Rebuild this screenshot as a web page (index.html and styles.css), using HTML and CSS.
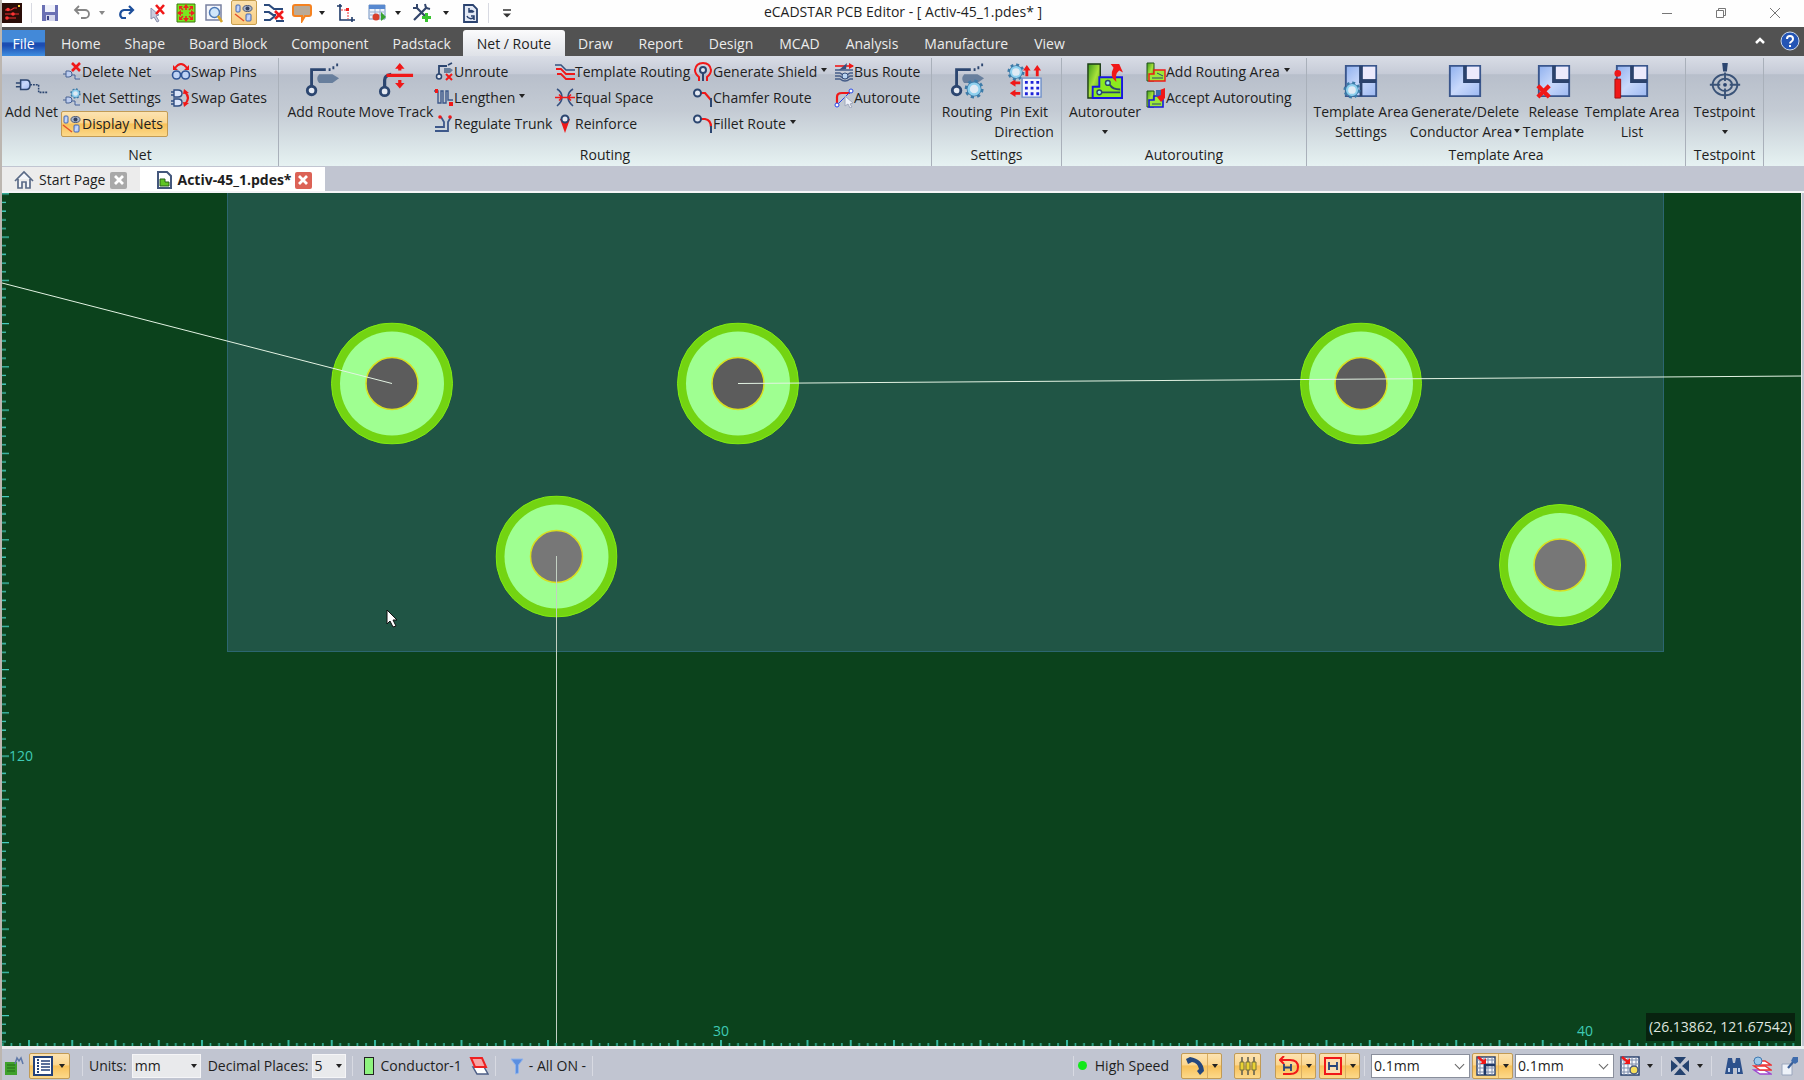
FILE: index.html
```html
<!DOCTYPE html>
<html lang="en">
<head>
<meta charset="utf-8">
<title>eCADSTAR PCB Editor - [ Activ-45_1.pdes* ]</title>
<link rel="stylesheet" href="styles.css">
</head>
<body>
<svg class="defs" aria-hidden="true">
  <defs>
    <linearGradient id="blue" x1="0" y1="0" x2="1" y2="1"><stop offset="0" stop-color="#8fb0ee"/><stop offset=".5" stop-color="#c9d9fb"/><stop offset="1" stop-color="#9db9f2"/></linearGradient>
    <linearGradient id="green" x1="0" y1="0" x2="1" y2="1"><stop offset="0" stop-color="#3c9a1e"/><stop offset=".5" stop-color="#a8e23a"/><stop offset="1" stop-color="#3a9a1c"/></linearGradient>
  </defs>
  <symbol id="app" viewBox="0 0 20 20"><path d="M0 0h20v20H0z" fill="#2a0d08"/><path d="M3 7h6l3-2h3M3 11h7M5 15h9M12 11h5" stroke="#e33" fill="none" stroke-width="1.200"/><circle cx="6" cy="6.500" r="1.800" fill="#f33"/><circle cx="11" cy="11" r="1.800" fill="#f33"/><circle cx="5" cy="15" r="1.800" fill="#f33"/><path d="M16 2h2v2h-2z" fill="#ffd23a"/></symbol>
  <symbol id="save" viewBox="0 0 20 20"><path d="M2 2h16v16H2z" fill="#6a70b4"/><path d="M5 2h10v7H5z" fill="#eef0fa"/><path d="M6 12h9v6H6z" fill="#d4d6ec"/><path d="M7 13h2v4H7z" fill="#3b4287"/></symbol>
  <symbol id="undo" viewBox="0 0 20 20"><path d="M7 3L3 7l4 4M3 7h10a4 4 0 0 1 0 8h-4" fill="none" stroke="#858585" stroke-width="1.800"/></symbol>
  <symbol id="redo" viewBox="0 0 20 20"><path d="M13 3l4 4-4 4M17 7H8a4.500 4.500 0 0 0-2 8h4" fill="none" stroke="#1d4f9b" stroke-width="2.200"/></symbol>
  <symbol id="desel" viewBox="0 0 20 20"><path d="M3 5l8 7-3 1 3 5-2 1-3-5-3 2z" fill="#c9ccdd" stroke="#8990ae"/><path d="M8 2l8 9M16 2l-8 9" stroke="#f01818" stroke-width="2.600"/></symbol>
  <symbol id="fit" viewBox="0 0 20 20"><path d="M1 1h18v18H1z" fill="#7be51f" stroke="#3c7a10"/><path d="M10 3v4M10 17v-4M3 10h4M17 10h-4M4 4l3 3M16 4l-3 3M4 16l3-3M16 16l-3-3" stroke="#e22" stroke-width="1.600"/><path d="M10 1l3 4H7zM10 19l3-4H7zM1 10l4-3v6zM19 10l-4-3v6zM3 3h4L3 7zM17 3v4l-4-4zM3 17v-4l4 4zM17 17h-4l4-4z" fill="#e22"/></symbol>
  <symbol id="zoomw" viewBox="0 0 20 20"><path d="M2 2h15v15H2z" fill="#f5f7fc" stroke="#7780a0" stroke-width="1.500"/><circle cx="10.500" cy="9.500" r="5" fill="#cfe6fa" stroke="#4d79b5" stroke-width="1.500"/><path d="M14 13l4 6" stroke="#d6a52a" stroke-width="2.500"/></symbol>
  <symbol id="disp" viewBox="0 0 20 20"><rect x="2" y="2" width="4" height="7" rx="1" fill="url(#blue)" stroke="#4668ae"/><rect x="12" y="11" width="5" height="7" rx="1" fill="url(#blue)" stroke="#4668ae"/><path d="M1 11l9 7" stroke="#e5522b" stroke-width="1.500"/><ellipse cx="13.500" cy="5.500" rx="4.500" ry="3" fill="#a8b6cc" stroke="#4b5878"/><circle cx="13.500" cy="5.500" r="2" fill="#35415f"/></symbol>
  <symbol id="wavex" viewBox="0 0 20 20"><path d="M0 2h5l5 4h9M0 9h5l4 3h3M0 17h6l5-4M12 18h8" fill="none" stroke="#2b4a7c" stroke-width="2.200"/><path d="M11 8l8 8M19 8l-8 8" stroke="#f01818" stroke-width="2.600"/></symbol>
  <symbol id="note" viewBox="0 0 20 20"><path d="M3 2h14q2 0 2 2v7q0 2-2 2h-4l-3 5v-5H3q-2 0-2-2V4q0-2 2-2z" fill="#b9aa98" stroke="#f58220" stroke-width="2"/></symbol>
  <symbol id="axis" viewBox="0 0 20 20"><path d="M4 1v16h15M1 3h5M16 14v5" fill="none" stroke="#1f3a68" stroke-width="1.600"/><path d="M5 7h7v9" fill="none" stroke="#e33" stroke-dasharray="2 1"/><path d="M10 5h3v3h-3z" fill="#e22"/></symbol>
  <symbol id="table" viewBox="0 0 20 20"><path d="M1 2h16v14H1z" fill="#eef3fb" stroke="#6f90c0"/><path d="M1 2h16v4H1z" fill="#5889d0"/><path d="M2 9h14M2 12h14M7 6v9M12 6v9" stroke="#97aed0"/><circle cx="8" cy="14" r="3.500" fill="#d8402c"/><path d="M13 9l5 5-5 4z" fill="#38a32f"/></symbol>
  <symbol id="tools" viewBox="0 0 20 20"><path d="M4 4l10 10M15 4L2 17" stroke="#33466c" stroke-width="2.200"/><path d="M1 5h4V1M13 1l1 4 4 1" fill="none" stroke="#33466c" stroke-width="2"/><path d="M14.500 10v9M10 14.500h9" stroke="#39c430" stroke-width="3"/></symbol>
  <symbol id="docref" viewBox="0 0 20 20"><path d="M4 2h9l4 4v13H4z" fill="#e3e9f5" stroke="#2a426f" stroke-width="1.800"/><path d="M7 13a4 4 0 0 0 7 1M14 9a4 4 0 0 0-5-1M9 5v4h4M14 17v-4h-3" fill="none" stroke="#2a426f" stroke-width="1.500"/></symbol>
  <symbol id="caretbar" viewBox="0 0 20 20"><path d="M6 7h8" stroke="#333" stroke-width="1.500"/><path d="M6 10.500h8l-4 4z" fill="#333"/></symbol>
  <symbol id="min" viewBox="0 0 20 20"><path d="M5 10.500h10" stroke="#777"/></symbol>
  <symbol id="restore" viewBox="0 0 20 20"><path d="M5.500 7.500h7v7h-7zM7.500 7.500v-2h7v7h-2" fill="none" stroke="#777"/></symbol>
  <symbol id="close" viewBox="0 0 20 20"><path d="M5 5l10 10M15 5L5 15" stroke="#777"/></symbol>
  <symbol id="help" viewBox="0 0 20 20"><circle cx="10" cy="10" r="9" fill="#2455b5" stroke="#cbd9ef"/><path d="M7 8q0-3 3-3t3 3q0 1.500-1.500 2.500T10 12.500M10 14v2" fill="none" stroke="#fff" stroke-width="2"/></symbol>

  <symbol id="addnet" viewBox="0 -4 38 38"><path d="M7 14h6q4 0 4 5t-4 5H7zM2 17h5M2 21h5" fill="url(#blue)" stroke="#2c4670" stroke-width="1.600"/><path d="M17 19h9v8h9" fill="none" stroke="#2c4670" stroke-width="1.600" stroke-dasharray="2 1"/></symbol>
  <symbol id="net" viewBox="0 0 20 20"><path d="M4 9h3q3 0 3 3t-3 3H4zM1 12h3M10 13h3v4h5" fill="#bccdf0" stroke="#466091"/></symbol>
  <symbol id="delnet" viewBox="0 0 20 20"><use href="#net"/><path d="M10 1l8 8M18 1l-8 8" stroke="#f01818" stroke-width="2.600"/></symbol>
  <symbol id="gear" viewBox="0 0 20 20"><circle cx="10" cy="10" r="8" fill="none" stroke="#3d7ba8" stroke-width="3" stroke-dasharray="3.200 3.080"/><circle cx="10" cy="10" r="5.500" fill="#fff" stroke="#3d7ba8" stroke-width="4"/><circle cx="10" cy="10" r="5.500" fill="#dfeaf4" stroke="#8ed0ee" stroke-width="2.400"/></symbol>
  <symbol id="netset" viewBox="0 0 20 20"><use href="#net"/><use href="#gear" x="8" y="0" width="11" height="11"/></symbol>
  <symbol id="swappin" viewBox="0 0 20 20"><circle cx="5.500" cy="13" r="4" fill="#bfd3f5" stroke="#2f5496" stroke-width="1.600"/><circle cx="14.500" cy="13" r="4" fill="#bfd3f5" stroke="#2f5496" stroke-width="1.600"/><path d="M4 6q6-8 12 0" fill="none" stroke="#f01818" stroke-width="1.800"/><path d="M2 3v5h5zM18 3v5h-5z" fill="#f01818"/></symbol>
  <symbol id="swapgate" viewBox="0 0 20 20"><path d="M3 2h4q4 0 4 3.500T7 9H3zM3 11h4q4 0 4 3.500T7 18H3zM0 4h3M0 7h3M0 13h3M0 16h3" fill="#dbe5fa" stroke="#2f4d82" stroke-width="1.400"/><path d="M14 4q6 6 0 12" fill="none" stroke="#f01818" stroke-width="2.200"/><path d="M12 6l1-5 5 4zM12 14l1 5 5-4z" fill="#f01818"/></symbol>
  <symbol id="route" viewBox="0 0 38 38"><path d="M8 25V7h15M26 7h2M30 5h2M34 2h2" fill="none" stroke="#2c4670" stroke-width="3"/><circle cx="8" cy="29" r="4.500" fill="#e5eaf3" stroke="#2c4670" stroke-width="3"/><path d="M16 12h14l7 4-7 5H16q-4-4 0-9z" fill="#687f9d"/></symbol>
  <symbol id="move" viewBox="0 0 38 38"><path d="M7 25V18q0-5 7-6" fill="none" stroke="#2c4670" stroke-width="3.400"/><circle cx="7" cy="30" r="4.500" fill="#e5eaf3" stroke="#2c4670" stroke-width="3"/><path d="M9 13h28M23 2v6M23 18v5" stroke="#f01818" stroke-width="3.400"/><path d="M18 6h10l-5-6zM18 21h10l-5 6z" fill="#f01818"/></symbol>
  <symbol id="unroute" viewBox="0 0 20 20"><path d="M5 12V4h8M14 3l4-2" fill="none" stroke="#2c4670" stroke-width="1.800"/><circle cx="5" cy="14.500" r="2.500" fill="#e5eaf3" stroke="#2c4670" stroke-width="1.500"/><path d="M10 6h6l3 2-3 3h-6z" fill="#687f9d"/><path d="M12 12l6 6M18 12l-6 6" stroke="#f01818" stroke-width="2"/></symbol>
  <symbol id="length" viewBox="0 0 20 20"><path d="M0 3h4v12h3V3h2v12h3V3h2v9h5" fill="none" stroke="#3d588a" stroke-width="1.400"/><path d="M1 1h3v4H1zM15 14h4v4h-4z" fill="#f01818"/></symbol>
  <symbol id="trunk" viewBox="0 0 20 20"><path d="M1 13h9V8L7 3M1 17h13V8l3-5" fill="none" stroke="#3d588a" stroke-width="1.800"/><circle cx="6" cy="3" r="1.800" fill="#f01818"/><circle cx="16" cy="3" r="1.800" fill="#f01818"/></symbol>
  <symbol id="tmplr" viewBox="0 0 20 20"><path d="M0 3h6l5 5h9" fill="none" stroke="#34507f" stroke-width="1.500"/><path d="M1 7h5l5 5h9M2 12h4l5 5h9" fill="none" stroke="#f01818" stroke-width="1.800"/></symbol>
  <symbol id="equal" viewBox="0 0 20 20"><path d="M2 1q5 3 5 8t-5 9M18 1q-5 3-5 8t5 9" fill="none" stroke="#34507f" stroke-width="1.600"/><path d="M0 9.500h20M4 6.500L7 9.500l-3 3M16 6.500l-3 3 3 3" fill="none" stroke="#f01818" stroke-width="1.500"/></symbol>
  <symbol id="reinf" viewBox="0 0 20 20"><path d="M5 5l5 14 5-14z" fill="#f01818"/><circle cx="10" cy="5" r="3.500" fill="#e5eaf3" stroke="#2c4670" stroke-width="2"/></symbol>
  <symbol id="shield" viewBox="0 0 20 20"><path d="M6 19v-4q-4-3-4-7 1-7 8-7t8 7q0 4-4 7v4" fill="none" stroke="#f01818" stroke-width="2"/><circle cx="10" cy="8" r="3" fill="#e5eaf3" stroke="#2c4670" stroke-width="2"/><path d="M10 11v8" stroke="#2c4670" stroke-width="2"/></symbol>
  <symbol id="chamfer" viewBox="0 0 20 20"><path d="M8 5h4l6 7" fill="none" stroke="#f01818" stroke-width="2.200"/><path d="M18 10v9" stroke="#2c4670" stroke-width="2"/><circle cx="4.500" cy="5" r="3.500" fill="#e5eaf3" stroke="#2c4670" stroke-width="2"/></symbol>
  <symbol id="fillet" viewBox="0 0 20 20"><path d="M8 5h4q6 1 6 8" fill="none" stroke="#f01818" stroke-width="2.200"/><path d="M18 12v7" stroke="#2c4670" stroke-width="2"/><circle cx="4.500" cy="5" r="3.500" fill="#e5eaf3" stroke="#2c4670" stroke-width="2"/></symbol>
  <symbol id="bus" viewBox="0 0 20 20"><path d="M1 8h18M1 11h5q5 4 10 0h3M1 14h5q5 5 10 0h3M1 17h5q5 4 10 0h3" fill="none" stroke="#445c88" stroke-width="1.400"/><path d="M1 4h18" stroke="#f01818" stroke-width="1.600"/><path d="M15 1l5 3-5 3z" fill="#f01818"/><path d="M5 8l8-7-1 6z" fill="#37507d"/><circle cx="11" cy="14" r="3" fill="#b9d4f2" stroke="#37507d"/></symbol>
  <symbol id="autor" viewBox="0 0 20 20"><path d="M3 16V9q0-4 5-4h8" fill="none" stroke="#f01818" stroke-width="2.200"/><path d="M3 17L17 3" stroke="#2746e8"/><circle cx="3" cy="17" r="2" fill="#fff" stroke="#2746e8"/><circle cx="17" cy="3" r="2" fill="#fff" stroke="#2746e8"/><path d="M11 8l8 7-3 1 2 3-2 1-2-4-3 2z" fill="#eef1f8" stroke="#a0a8bc"/></symbol>
  <symbol id="routeset" viewBox="0 0 38 38"><use href="#route"/><use href="#gear" x="16" y="17" width="21" height="21"/></symbol>
  <symbol id="pinexit" viewBox="0 0 38 38"><path d="M17 16h20v20H17z" fill="#f4f6ff" stroke="#7090c8" stroke-width="1.500"/><path d="M20 19h3v3h-3zM26 19h3v3h-3zM32 19h3v3h-3zM20 25h3v3h-3zM26 25h3v3h-3zM32 25h3v3h-3zM20 31h3v3h-3zM26 31h3v3h-3zM32 31h3v3h-3z" fill="#1c22d8"/><path d="M22 14V7M33 14V7M15 21H9M15 32H9" stroke="#f01818" stroke-width="3"/><path d="M18 8h8l-4-6zM29 8h8l-4-6zM10 17v8l-6-4zM10 28v8l-6-4z" fill="#f01818"/><use href="#gear" x="1" y="0" width="19" height="19"/></symbol>
  <symbol id="autorouter" viewBox="0 0 38 38"><path d="M1 1h13v36H1z" fill="url(#green)" stroke="#1d3d18" stroke-width="1.500"/><path d="M6 25h7V15h24v22H6z" fill="#8bea1e" stroke="#1717e0" stroke-width="2"/><path d="M15 31h20M24 23q3 5 11 5" fill="none" stroke="#2c4670" stroke-width="2"/><circle cx="13" cy="31" r="2.500" fill="#9ee" stroke="#2c4670" stroke-width="1.500"/><circle cx="22" cy="21" r="2.500" fill="#9ee" stroke="#2c4670" stroke-width="1.500"/><path d="M25 1h9l4 9-4-2q-5 4-3 12-8-6-3-15z" fill="#f01818"/></symbol>
  <symbol id="addarea" viewBox="0 0 20 20"><path d="M1 1h7v18H1z" fill="url(#green)" stroke="#20501c"/><path d="M3 12h5V8h11v11H3z" fill="#9be83a" stroke="#f01818" stroke-width="1.400"/><path d="M6 16h11M11 11l6 3" stroke="#2c4670"/></symbol>
  <symbol id="accept" viewBox="0 0 20 20"><path d="M1 3h7v16H1z" fill="url(#green)" stroke="#20501c"/><path d="M3 12h5V8h9v11H3z" fill="#9be83a" stroke="#1717e0" stroke-width="1.600"/><path d="M6 16h9" stroke="#2c4670"/><path d="M14 2l5-2v10l-4 4-4-5 4-2z" fill="#f01818"/><path d="M10 2h5v5h-5z" fill="#3a6cac"/></symbol>
  <symbol id="tarea" viewBox="0 0 38 38"><path d="M3 3h32v32H3z" fill="url(#blue)" stroke="#3a568c" stroke-width="2"/><path d="M19 3v16h16" fill="none" stroke="#2b426c" stroke-width="4"/><path d="M21 4h13v13H21z" fill="#eceafc"/></symbol>
  <symbol id="tareaset" viewBox="0 0 38 38"><use href="#tarea"/><path d="M19 19v16" stroke="#2b426c" stroke-width="3"/><use href="#gear" x="0" y="19" width="19" height="19"/></symbol>
  <symbol id="trelease" viewBox="0 0 38 38"><use href="#tarea"/><path d="M2 24l12 12M14 24L2 36" stroke="#f01818" stroke-width="4.500"/></symbol>
  <symbol id="tlist" viewBox="0 0 38 38"><use href="#tarea"/><circle cx="4" cy="11" r="3.500" fill="#f01818"/><path d="M1 17h6v20H1z" fill="#f01818" stroke="#a01010"/></symbol>
  <symbol id="testpt" viewBox="0 0 38 38"><path d="M16 0h6l-1 9h-4z" fill="#2c4670"/><g fill="none" stroke="#3a5378" stroke-width="2"><ellipse cx="19" cy="23" rx="13" ry="11"/><ellipse cx="19" cy="23" rx="7.500" ry="6.500"/><path d="M19 10v9M19 27v11M3 23h11M24 23h11"/></g><circle cx="19" cy="23" r="2" fill="#2c4670"/></symbol>

  <symbol id="home" viewBox="0 0 20 20"><path d="M1 11l9-9 9 9M4 9v9h4v-6h4v6h4V9" fill="#f4f6fa" stroke="#5a6a87" stroke-width="1.700"/></symbol>
  <symbol id="docpcb" viewBox="0 0 20 20"><path d="M4 2h9l4 4v12H4z" fill="#fff" stroke="#44577c" stroke-width="2"/><path d="M6 9h5v3h4v4H6z" fill="#5fc424" stroke="#26601a"/></symbol>
  <symbol id="x" viewBox="0 0 20 20"><path d="M6 6l8 8M14 6l-8 8" stroke="#fff" stroke-width="2.800"/></symbol>

  <symbol id="pcb" viewBox="0 0 20 20"><path d="M1 6h12v13H1z" fill="#3fa12b"/><path d="M3 9h8M3 12h8M3 15h8" stroke="#236b18"/><path d="M11 8l2-6 2 3 2-3 2 6" fill="none" stroke="#5f78a8" stroke-width="1.500"/></symbol>
  <symbol id="list" viewBox="0 0 20 20"><path d="M1 1h18v18H1z" fill="#fff" stroke="#24427a" stroke-width="2"/><path d="M5 3v14" stroke="#24427a" stroke-width="2" stroke-dasharray="2 1"/><path d="M8 5h9M8 8h9M8 11h9M8 14h9" stroke="#24427a" stroke-width="1.500"/></symbol>
  <symbol id="layer" viewBox="0 0 20 20"><path d="M4 11h11l4 7H8z" fill="#fff" stroke="#4d5f86" stroke-width="1.500"/><path d="M2 2h11l4 9H6z" fill="#f6a6a6" stroke="#ee2020" stroke-width="2"/></symbol>
  <symbol id="funnel" viewBox="0 0 20 20"><path d="M4 3h12l-4.500 6v8l-3 1V9z" fill="#5b8fe0" stroke="#8fb2ea"/></symbol>
  <symbol id="arc" viewBox="0 0 20 20"><path d="M1 3l4-2q13 2 14 14l-4 4-3-4 2-2q-1-6-7-7L3 8z" fill="#24477e"/></symbol>
  <symbol id="pins" viewBox="0 0 20 20"><path d="M4 1v18M10 1v18M16 1v18" stroke="#5b5b4d" stroke-width="1.500"/><path d="M2 6h4v8H2zM8 6h4v8H8zM14 6h4v8h-4z" fill="#ead232" stroke="#75703a"/></symbol>
  <symbol id="loop" viewBox="0 0 20 20"><path d="M2 4h9q8 0 8 7t-8 7H4M5 0L1 4l4 4" fill="none" stroke="#f01818" stroke-width="2"/><path d="M5 8v7M12 8v7M5 11.500h7" stroke="#24427a" stroke-width="1.800"/></symbol>
  <symbol id="hbox" viewBox="0 0 20 20"><path d="M2 2h16v16H2z" fill="#fbdcb0" stroke="#f01818" stroke-width="2"/><path d="M6 6v8M14 6v8M6 10h8" stroke="#24427a" stroke-width="1.800"/></symbol>
  <symbol id="grid" viewBox="0 0 20 20"><path d="M1 1h18v18H1z" fill="#f7f8fc" stroke="#2d446f" stroke-width="1.500"/><path d="M4 1v18M8 1v18M12 1v18M16 1v18M1 4h18M1 8h18M1 12h18M1 16h18" stroke="#7d8cab"/><path d="M2 1l7 6" stroke="#f01818" stroke-width="2.500"/><path d="M10 2v6H4z" fill="#f01818"/></symbol>
  <symbol id="gridx" viewBox="0 0 20 20"><use href="#grid"/><path d="M9 8v11M9 9h10" stroke="#1c3766" stroke-width="2.500"/></symbol>
  <symbol id="gridg" viewBox="0 0 20 20"><use href="#grid"/><circle cx="14" cy="14" r="4" fill="#f6de5a" stroke="#47587d" stroke-width="1.500"/></symbol>
  <symbol id="bow" viewBox="0 0 20 20"><path d="M4 1h12l-6 7zM4 19h12l-6-7zM1 4v12l7-6zM19 4v12l-7-6z" fill="#24426f"/></symbol>
  <symbol id="binoc" viewBox="0 0 20 20"><path d="M4 2h4l1 5h2l1-5h4l3 16h-6v-6H9v6H1z" fill="#2d518c"/><path d="M4 12h2v4H4zM14 12h2v4h-2z" fill="#b9cff0"/></symbol>
  <symbol id="layers3" viewBox="0 0 20 20"><path d="M2 14h10l7 4H8z" fill="#fff" stroke="#a04ad0" stroke-width="1.400"/><path d="M2 10h11l6 4H8z" fill="#fff" stroke="#e33" stroke-width="1.400"/><path d="M3 5h10l6 4H8z" fill="#fff" stroke="#e33" stroke-width="1.400"/><circle cx="6" cy="5" r="4" fill="#9cc8ea" stroke="#4179b0"/></symbol>
  <symbol id="probe" viewBox="0 0 20 20"><path d="M2 8h10v11H2z" fill="#eef2f9" stroke="#9aa6bd"/><path d="M8 12l6-7" stroke="#3a5f98" stroke-width="2.200"/><path d="M13 1h5v5l-3 2-4-3z" fill="#3f6cad"/></symbol>
</svg>

<div class="window">
<header class="titlebar">
  <div class="quick">
    <span class="tb app"><svg><use href="#app"/></svg></span><span class="sep"></span>
    <button class="tb wide" aria-label="Save"><svg><use href="#save"/></svg></button>
    <button class="tb" aria-label="Undo"><svg><use href="#undo"/></svg></button><button class="arr dim" aria-label="Undo list"></button>
    <button class="tb wide" aria-label="Redo"><svg><use href="#redo"/></svg></button>
    <button class="tb" aria-label="Deselect"><svg><use href="#desel"/></svg></button>
    <button class="tb" aria-label="Zoom fit"><svg><use href="#fit"/></svg></button>
    <button class="tb" aria-label="Zoom window"><svg><use href="#zoomw"/></svg></button>
    <button class="tb on" aria-label="Display nets"><svg><use href="#disp"/></svg></button>
    <button class="tb" aria-label="Delete route"><svg><use href="#wavex"/></svg></button>
    <button class="tb" aria-label="Note"><svg><use href="#note"/></svg></button><button class="arr" aria-label="Note options"></button>
    <button class="tb wide" aria-label="Origin"><svg><use href="#axis"/></svg></button>
    <button class="tb" aria-label="Run table"><svg><use href="#table"/></svg></button><button class="arr" aria-label="Table options"></button>
    <button class="tb wide" aria-label="Tools"><svg><use href="#tools"/></svg></button><button class="arr" aria-label="Tool options"></button>
    <button class="tb wide" aria-label="Reference"><svg><use href="#docref"/></svg></button><span class="sep"></span>
    <button class="tb wide" aria-label="Customize"><svg><use href="#caretbar"/></svg></button>
  </div>
  <h1>eCADSTAR PCB Editor - [ Activ-45_1.pdes* ]</h1>
  <div class="winbtns">
    <button aria-label="Minimize"><svg><use href="#min"/></svg></button>
    <button aria-label="Restore"><svg><use href="#restore"/></svg></button>
    <button aria-label="Close"><svg><use href="#close"/></svg></button>
  </div>
</header>

<nav class="menu">
  <button class="file">File</button>
  <button>Home</button><button>Shape</button><button>Board Block</button><button>Component</button><button>Padstack</button>
  <button class="active">Net / Route</button>
  <button>Draw</button><button>Report</button><button>Design</button><button>MCAD</button><button>Analysis</button><button>Manufacture</button><button>View</button>
  <span class="menu-end">
    <button class="fold" aria-label="Collapse ribbon"><svg viewBox="0 0 12 8"><path d="M2 6l4-4 4 4" fill="none" stroke="#fff" stroke-width="2.500"/></svg></button>
    <button class="help" aria-label="Help"><svg><use href="#help"/></svg></button>
  </span>
</nav>

<section class="ribbon">
  <div class="group net">
    <div class="cols">
      <button class="big"><svg><use href="#addnet"/></svg><span>Add Net</span></button>
      <div class="col">
        <button><svg><use href="#delnet"/></svg>Delete Net</button>
        <button><svg><use href="#netset"/></svg>Net Settings</button>
        <button class="on"><svg><use href="#disp"/></svg>Display Nets</button>
      </div>
      <div class="col">
        <button><svg><use href="#swappin"/></svg>Swap Pins</button>
        <button><svg><use href="#swapgate"/></svg>Swap Gates</button>
      </div>
    </div>
    <h2>Net</h2>
  </div>
  <div class="group routing">
    <div class="cols">
      <button class="big"><svg><use href="#route"/></svg><span>Add Route</span></button>
      <button class="big"><svg><use href="#move"/></svg><span>Move Track</span></button>
      <div class="col">
        <button><svg><use href="#unroute"/></svg>Unroute</button>
        <button><svg><use href="#length"/></svg>Lengthen<i class="tri"></i></button>
        <button><svg><use href="#trunk"/></svg>Regulate Trunk</button>
      </div>
      <div class="col">
        <button><svg><use href="#tmplr"/></svg>Template Routing</button>
        <button><svg><use href="#equal"/></svg>Equal Space</button>
        <button><svg><use href="#reinf"/></svg>Reinforce</button>
      </div>
      <div class="col">
        <button><svg><use href="#shield"/></svg>Generate Shield<i class="tri"></i></button>
        <button><svg><use href="#chamfer"/></svg>Chamfer Route</button>
        <button><svg><use href="#fillet"/></svg>Fillet Route<i class="tri"></i></button>
      </div>
      <div class="col">
        <button><svg><use href="#bus"/></svg>Bus Route</button>
        <button><svg><use href="#autor"/></svg>Autoroute</button>
      </div>
    </div>
    <h2>Routing</h2>
  </div>
  <div class="group settings">
    <div class="cols">
      <button class="big"><svg><use href="#routeset"/></svg><span>Routing</span></button>
      <button class="big"><svg><use href="#pinexit"/></svg><span>Pin Exit</span><span>Direction</span></button>
    </div>
    <h2>Settings</h2>
  </div>
  <div class="group autorouting">
    <div class="cols">
      <button class="big"><svg><use href="#autorouter"/></svg><span>Autorouter</span><i class="tri under"></i></button>
      <div class="col">
        <button><svg><use href="#addarea"/></svg>Add Routing Area<i class="tri"></i></button>
        <button><svg><use href="#accept"/></svg>Accept Autorouting</button>
      </div>
    </div>
    <h2>Autorouting</h2>
  </div>
  <div class="group template">
    <div class="cols">
      <button class="big"><svg><use href="#tareaset"/></svg><span>Template Area</span><span>Settings</span></button>
      <button class="big"><svg><use href="#tarea"/></svg><span>Generate/Delete</span><span>Conductor Area<i class="tri"></i></span></button>
      <button class="big"><svg><use href="#trelease"/></svg><span>Release</span><span>Template</span></button>
      <button class="big"><svg><use href="#tlist"/></svg><span>Template Area</span><span>List</span></button>
    </div>
    <h2>Template Area</h2>
  </div>
  <div class="group testpoint">
    <div class="cols">
      <button class="big"><svg><use href="#testpt"/></svg><span>Testpoint</span><i class="tri under"></i></button>
    </div>
    <h2>Testpoint</h2>
  </div>
</section>

<div class="doctabs">
  <div class="doctab start"><svg><use href="#home"/></svg><span>Start Page</span><button aria-label="Close Start Page"><svg><use href="#x"/></svg></button></div>
  <div class="doctab current"><svg><use href="#docpcb"/></svg><span>Activ-45_1.pdes*</span><button aria-label="Close Activ-45_1.pdes"><svg><use href="#x"/></svg></button></div>
</div>

<main class="board">
  <svg class="drawing" role="img" aria-label="Board layout">
    <defs>
      <pattern id="vt" width="10" height="43.250" y="0.250" patternUnits="userSpaceOnUse"><path d="M0 0h7v1.300H0zM0 8.650h4v1.300H0zM0 17.300h4v1.300H0zM0 25.950h4v1.300H0zM0 34.600h4v1.300H0z" fill="#45cdbf"/></pattern>
      <symbol id="pad" viewBox="-61 -61 122 122"><circle r="60.500" fill="#73d412" stroke="#82ea12"/><circle r="52" fill="#9fff91"/><circle r="26" fill="#5c5c5c" stroke="#d8e021" stroke-width="1.500"/></symbol>
      <symbol id="pad2" viewBox="-61 -61 122 122"><circle r="60.500" fill="#73d412" stroke="#82ea12"/><circle r="52" fill="#9fff91"/><circle r="26" fill="#777" stroke="#d8e021" stroke-width="1.500"/></symbol>
    </defs>
    <rect x="225.500" y="-2" width="1436" height="460.500" fill="#205545" stroke="#2c6670"/>
    <use href="#pad" x="329" y="129.500" width="122" height="122"/>
    <use href="#pad" x="675" y="129.500" width="122" height="122"/>
    <use href="#pad" x="1298" y="129.500" width="122" height="122"/>
    <use href="#pad2" x="493.500" y="302.500" width="122" height="122"/>
    <use href="#pad2" x="1497" y="311" width="122" height="122"/>
    <path d="M0 90L390 190.500M736 190.500L1800 183" fill="none" stroke="#e3f3e3"/>
    <path d="M554.500 363V3000" stroke="#c3d0c3"/>
    <rect width="10" height="3000" fill="url(#vt)"/>
    <text x="7" y="568" class="scale">120</text>
    <path d="M385 417v14l3-3 3 6 3-1-3-6h4z" fill="#fff" stroke="#111"/>
  </svg>
  <svg class="ruler" aria-hidden="true">
    <defs><pattern id="ht" width="43.250" height="30" x="26" patternUnits="userSpaceOnUse"><path d="M0 24h2v6H0zM8.650 27h1.500v3h-1.500zM17.300 27h1.500v3h-1.500zM25.950 27h1.500v3h-1.500zM34.600 27h1.500v3h-1.500z" fill="#35b8a0"/></pattern></defs>
    <rect width="100%" height="30" fill="url(#ht)"/>
    <text x="719" y="20" text-anchor="middle" class="scale">30</text>
    <text x="1583" y="20" text-anchor="middle" class="scale">40</text>
  </svg>
  <output class="coords">(26.13862, 121.67542)</output>
</main>

<footer class="status">
  <div class="left">
    <button class="ic" aria-label="Board view"><svg><use href="#pcb"/></svg></button>
    <span class="split"><button aria-label="Panel list"><svg><use href="#list"/></svg></button><button class="arr" aria-label="Panel options"></button></span>
    <span class="sep"></span>
    <label for="units">Units:</label>
    <span class="pick units"><select id="units"><option>mm</option></select></span>
    <label for="places">Decimal Places:</label>
    <span class="pick places"><select id="places"><option>5</option></select></span>
    <span class="sep"></span>
    <span class="swatch"></span><span class="layername">Conductor-1</span>
    <button class="ic" aria-label="Layer"><svg><use href="#layer"/></svg></button>
    <span class="sep"></span>
    <button class="ic filter"><svg><use href="#funnel"/></svg>- All ON -</button>
    <span class="sep"></span>
  </div>
  <div class="right">
    <span class="sep"></span>
    <span class="dot"></span><span class="speed">High Speed</span>
    <span class="split"><button aria-label="Arc mode"><svg><use href="#arc"/></svg></button><button class="arr" aria-label="Arc options"></button></span>
    <span class="split alone"><button aria-label="Pins"><svg><use href="#pins"/></svg></button></span>
    <span class="split"><button aria-label="Loop"><svg><use href="#loop"/></svg></button><button class="arr" aria-label="Loop options"></button></span>
    <span class="split"><button aria-label="Clearance"><svg><use href="#hbox"/></svg></button><button class="arr" aria-label="Clearance options"></button></span>
    <span class="sep"></span>
    <span class="combo"><select aria-label="Routing grid"><option>0.1mm</option></select></span>
    <span class="split"><button aria-label="Grid"><svg><use href="#gridx"/></svg></button><button class="arr" aria-label="Grid options"></button></span>
    <span class="combo"><select aria-label="Via grid"><option>0.1mm</option></select></span>
    <span class="split off"><button aria-label="Via grid display"><svg><use href="#gridg"/></svg></button><button class="arr" aria-label="Via grid options"></button></span>
    <span class="sep"></span>
    <span class="split off"><button aria-label="Center"><svg><use href="#bow"/></svg></button><button class="arr" aria-label="Center options"></button></span>
    <span class="sep"></span>
    <button class="ic" aria-label="Find"><svg><use href="#binoc"/></svg></button>
    <button class="ic" aria-label="Layer settings"><svg><use href="#layers3"/></svg></button>
    <button class="ic" aria-label="Probe"><svg><use href="#probe"/></svg></button>
  </div>
</footer>
</div>
</body>
</html>
```
FILE: styles.css
```css
* { box-sizing: border-box; }
html, body { height: 100%; }
body {
  margin: 0;
  overflow: hidden;
  font: 14px/20px "Open Sans", "Noto Sans", sans-serif;
  color: #1e1e1e;
}
button, select { font: inherit; color: inherit; border: 0; background: none; padding: 0; margin: 0; white-space: nowrap; }
h1, h2 { font-size: 14px; font-weight: 400; margin: 0; }
svg { display: block; flex: none; width: 20px; height: 20px; }
svg.defs { position: absolute; width: 0; height: 0; }

.window {
  height: 100%;
  display: flex;
  flex-direction: column;
  border-left: 2px solid #bcb6b0;
  background: #c1c5d1;
}
.sep { width: 1px; height: 20px; background: #d8dae2; flex: none; }
.arr { position: relative; width: 12px; height: 20px; display: flex; align-items: center; justify-content: center; }
.arr::before, .tri::before { content: ""; display: block; border: 3px solid transparent; border-top: 4px solid #222; border-bottom: 0; }
.arr.dim::before { border-top-color: #888; }

/* title bar */
.titlebar { position: relative; height: 27px; flex: none; background: #fefefe; display: flex; justify-content: space-between; align-items: flex-start; }
.quick { display: flex; align-items: center; height: 25px; }
.quick .tb { width: 28px; height: 25px; display: flex; align-items: center; justify-content: center; }
.quick .wide { width: 36px; }
.quick .app { width: 20px; margin-right: 9px; }
.quick .on { width: 26px; margin: 0 3px; border: 1px solid #c8a050; border-radius: 2px; background: linear-gradient(#fbe2b0, #f9cf83); }
.titlebar h1 { position: absolute; left: 0; right: 0; top: 2px; text-align: center; pointer-events: none; }
.winbtns { display: flex; height: 25px; align-items: center; padding-right: 2px; }
.winbtns button { width: 54px; display: flex; justify-content: center; }

/* menu */
.menu { height: 29px; flex: none; display: flex; align-items: stretch; padding-top: 3px; background: #525252; color: #ececec; }
.menu button { padding: 2px 12px 0; }
.menu .file { padding: 2px 0 0; width: 43px; margin-right: 4px; color: #fff; background: linear-gradient(#4389d8 0 45%, #1c4db2 50% 60%, #3f8ee0); }
.menu .active { color: #1e1e1e; background: linear-gradient(#fbfbfc, #dfe2e8); border-radius: 3px 3px 0 0; padding: 2px 14px 0; }
.menu .active ~ button { padding: 2px 13px 0; }
.menu-end { display: flex; align-items: center; margin-left: auto; gap: 14px; padding: 0 4px 4px 0; }
.menu .menu-end button { padding: 0; }
.fold svg { width: 12px; height: 8px; }

/* ribbon */
.ribbon {
  height: 110px;
  flex: none;
  display: grid;
  grid-template-columns: 277px 653px 130px 245px 379px 78px;
  padding: 2px 0 0;
  background: linear-gradient(#d9dde6, #c6cbd7 16%, #b8bfcb 17%, #c4cbd4 50%, #e6f2f2);
}
.group { display: flex; flex-direction: column; border-right: 1px solid #a9b0ba; }
.group h2 { margin-top: auto; text-align: center; line-height: 22px; }
.cols { display: grid; height: 82px; }
.net .cols { grid-template-columns: 59px 109px 106px; }
.routing .cols { grid-template-columns: 75px 74px 121px 138px 141px 100px; padding-left: 5px; }
.settings .cols { grid-template-columns: 62px 52px; padding-left: 4px; }
.autorouting .cols { grid-template-columns: 80px 160px; padding-left: 3px; }
.template .cols { grid-template-columns: 108px 100px 77px 80px; }
.template .tri { margin-left: 2px; }
.testpoint .cols { grid-template-columns: 1fr; }
.col { display: flex; flex-direction: column; padding-top: 1px; align-items: flex-start; }
.col button { height: 26px; padding: 0 4px 0 0; display: flex; align-items: center; border: 1px solid transparent; }
.col .on, .split { border-color: #c29b55; border-radius: 2px; background: linear-gradient(#fce3b2, #fbd68f 45%, #f8c15a 50%, #fcd98a); }
.big { display: flex; flex-direction: column; align-items: center; justify-content: flex-start; padding-top: 4px; line-height: 20px; }
.big > svg { width: 36px; height: 38px; margin-bottom: 2px; }
.tri { display: inline-block; vertical-align: middle; margin: 0 0 4px 4px; }
.under { margin: 8px 0 0; }

/* document tabs */
.doctabs { height: 27px; flex: none; display: flex; align-items: flex-end; border-bottom: 2px solid #f4f4f6; }
.doctab { height: 24px; display: flex; align-items: center; gap: 5px; padding: 2px 13px 0 12px; background: #ececec; }
.doctab.current { background: #fff; font-weight: 700; gap: 3px; padding-left: 14px; }
.doctab button { width: 17px; height: 17px; border-radius: 2px; background: #a9a9a9; display: flex; justify-content: center; align-items: center; }
.doctab.current button { background: #dc6256; }

/* board */
.board { position: relative; flex: 1; min-height: 0; margin-right: 2px; overflow: hidden; background: #0b421c; border-right: 1px solid #e8e8e8; }
.drawing { position: absolute; inset: 0; width: 100%; height: 100%; }
.ruler { position: absolute; left: 0; bottom: 0; width: 100%; height: 30px; }
.scale { font-size: 14px; fill: #3fcab5; }
.coords { position: absolute; right: 6px; bottom: 5px; padding: 4px 3px; background: #08220f; color: #dfe5df; }

/* status bar */
.status { height: 34px; flex: none; display: flex; justify-content: space-between; align-items: center; border-top: 3px solid #ececee; padding: 2px 4px 0 2px; }
.left, .right { display: flex; align-items: center; }
.ic { display: flex; align-items: center; }
.split { display: flex; height: 26px; border: 1px solid #c29b55; }
.split button { width: 25px; display: flex; align-items: center; justify-content: center; }
.split .arr { width: 14px; height: auto; border-left: 1px solid #d9ad62; }
.split.off { background: none; border-color: transparent; }
.split.off .arr { border-color: transparent; }
.left .sep { margin: 0 6px; }
.right .sep { margin: 0 4px; }
.pick, .combo { position: relative; height: 24px; display: flex; background: #e9eaec; border: 1px solid #f5f5f7; }
.pick::after { content: ""; position: absolute; right: 3px; top: 9px; border: 3px solid transparent; border-top: 4px solid #222; border-bottom: 0; pointer-events: none; }
.pick select, .combo select { appearance: none; width: 100%; padding: 0 2px; outline: 0; }
.units { width: 69px; margin: 0 7px 0 5px; }
.places { width: 34px; margin: 0 0 0 3px; }
.combo { width: 99px; background: #fff; border: 1px solid #8a8f9c; margin: 0 2px; }
.combo::after { content: ""; position: absolute; right: 6px; top: 6px; width: 6px; height: 6px; border: solid #666; border-width: 0 1px 1px 0; transform: rotate(45deg); pointer-events: none; }
.swatch { width: 10px; height: 18px; margin: 0 7px 0 5px; background: #8ef37f; border: 1px solid #222; }
.layername { margin-right: 7px; }
.filter { gap: 2px; padding-left: 5px; }
.left .split { margin: 0 6px 0 5px; }
.left .split .arr { border-left: 0; }
.dot { width: 9px; height: 9px; border-radius: 50%; background: #12e81a; margin: 0 8px 0 0; }
.speed { margin-right: 12px; }
.right .split + .split { margin-left: 3px; }
.right .split.alone { margin: 0 11px 0 12px; }
.right .ic { margin-left: 8px; }
```
